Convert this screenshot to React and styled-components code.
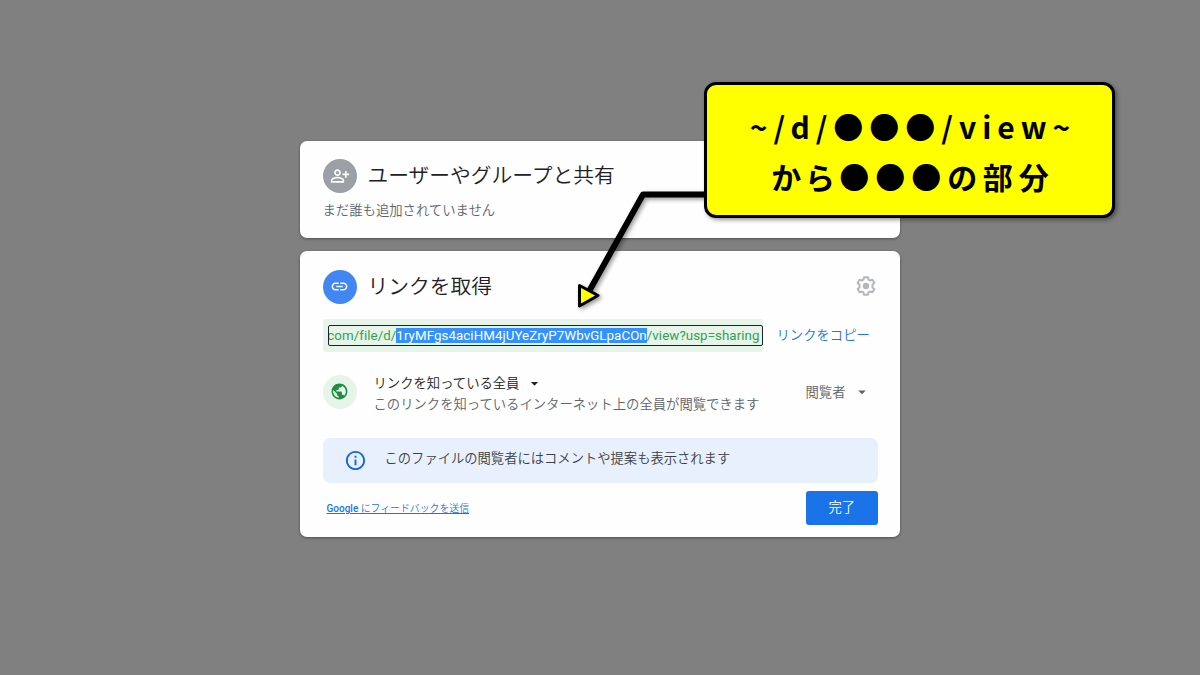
import React from 'react';
import styled, { createGlobalStyle } from 'styled-components';
import {
  MdArrowDropDown,
  MdLink,
  MdOutlineInfo,
  MdOutlinePersonAddAlt,
  MdPublic,
} from 'react-icons/md';

function SettingsIcon() {
  return (
    <svg width="20" height="20" viewBox="0 0 20 20" fill="none">
      <path
        d="M8 1.2h4l.5 2.4 1.5.9 2.4-.8 2 3.3-1.9 1.6v2.8l1.9 1.6-2 3.3-2.4-.8-1.5.9-.5 2.4H8l-.5-2.4-1.5-.9-2.4.8-2-3.3 1.9-1.6V8.6L1.6 7l2-3.3 2.4.8 1.5-.9z"
        stroke="#b4b7ba"
        strokeWidth="2"
        strokeLinejoin="round"
      />
      <circle cx="10" cy="10" r="3.2" fill="#b4b7ba" />
    </svg>
  );
}

function App() {
  return (
    <>
      <GlobalStyle />
      <Stage>
        <Dialog>
          <PeopleCard>
            <CardHeader>
              <Avatar $bg="#9aa0a6" $color="#fff">
                <MdOutlinePersonAddAlt size={20} />
              </Avatar>
              <Title>ユーザーやグループと共有</Title>
            </CardHeader>
            <Subtitle>まだ誰も追加されていません</Subtitle>
          </PeopleCard>

          <LinkCard>
            <CardHeader>
              <Avatar $bg="#4285f4" $color="#fff">
                <MdLink size={19} />
              </Avatar>
              <Title>リンクを取得</Title>
              <SettingsIcon />
            </CardHeader>

            <LinkRow>
              <LinkBox>
                <LinkField>
                  <LinkText>
                    com/file/d/
                    <Selected>1ryMFgs4aciHM4jUYeZryP7WbvGLpaCOn</Selected>
                    /view?usp=sharing
                  </LinkText>
                </LinkField>
              </LinkBox>
              <CopyButton>リンクをコピー</CopyButton>
            </LinkRow>

            <AccessRow>
              <Avatar $bg="#e6f4ea" $color="#1e8e3e">
                <MdPublic size={19} />
              </Avatar>
              <AccessText>
                <Scope>
                  リンクを知っている全員
                  <MdArrowDropDown size={17} />
                </Scope>
                <Description>
                  このリンクを知っているインターネット上の全員が閲覧できます
                </Description>
              </AccessText>
              <Role>
                閲覧者
                <MdArrowDropDown size={18} />
              </Role>
            </AccessRow>

            <Notice>
              <MdOutlineInfo size={23} />
              <NoticeText>
                このファイルの閲覧者にはコメントや提案も表示されます
              </NoticeText>
            </Notice>

            <Footer>
              <Feedback href="#">
                <b>Google</b> にフィードバックを送信
              </Feedback>
              <DoneButton>完了</DoneButton>
            </Footer>
          </LinkCard>
        </Dialog>

        <Pointer width="140" height="130" viewBox="0 0 140 130">
          <path d="M140 14.5H73L17 115" fill="none" stroke="#000" strokeWidth="6" strokeLinejoin="round" />
          <path
            d="M9.5 105.5l18.5 10-18.5 10.5z"
            fill="#ff0"
            stroke="#000"
            strokeWidth="3"
            strokeLinejoin="round"
          />
        </Pointer>
        <Callout>
          <span>~/d/●●●/view~</span>
          <span>から●●●の部分</span>
        </Callout>
      </Stage>
    </>
  );
}

export default App;

const GlobalStyle = createGlobalStyle`
  * {
    box-sizing: border-box;
  }
  body {
    margin: 0;
    background: #808080;
    font-family: Roboto, 'Noto Sans CJK JP', sans-serif;
    font-weight: 350;
  }
`;

const Stage = styled.main`
  position: relative;
  width: 1200px;
  height: 675px;
  overflow: hidden;
  display: flex;
  flex-direction: column;
  align-items: center;
  justify-content: center;
  background: #808080;
`;

const Dialog = styled.div`
  width: 600px;
  display: flex;
  flex-direction: column;
  gap: 13px;
  padding-top: 2px;
`;

const Card = styled.section`
  background: #fefefe;
  border-radius: 7px;
  box-shadow: 0 1px 3px rgba(0, 0, 0, 0.4);
  padding: 0 22.5px;
`;

const PeopleCard = styled(Card)`
  height: 97.5px;
  padding-top: 18.5px;
`;

const LinkCard = styled(Card)`
  height: 285.5px;
  padding-top: 18.5px;
`;

const CardHeader = styled.header`
  display: flex;
  align-items: center;

  > svg {
    margin: 0 1.5px 2px 0;
  }
`;

const Avatar = styled.div`
  flex: none;
  width: 34px;
  height: 34px;
  border-radius: 50%;
  display: flex;
  align-items: center;
  justify-content: center;
  background: ${(props) => props.$bg};
  color: ${(props) => props.$color};
`;

const Title = styled.h1`
  flex: 1;
  margin: 0 0 0 11px;
  font-size: 20.75px;
  line-height: 34px;
  font-weight: 350;
  color: #202124;
  white-space: nowrap;
`;

const Subtitle = styled.p`
  margin: 7.5px 0 0;
  font-size: 13.35px;
  line-height: 20px;
  color: #5f6368;
`;

const LinkRow = styled.div`
  display: flex;
  align-items: center;
  margin-top: 15px;
`;

const LinkBox = styled.div`
  width: 440px;
  height: 33px;
  padding: 6px 0 6px 5px;
  border-radius: 3px;
  background: #e6f4ea;
`;

const LinkField = styled.div`
  display: flex;
  justify-content: flex-end;
  align-items: center;
  height: 21px;
  overflow: hidden;
  border: 1.5px solid #202124;
  border-radius: 2px;
  padding-right: 2px;
`;

const LinkText = styled.span`
  font-size: 13.33px;
  font-weight: 400;
  line-height: 15px;
  letter-spacing: 0.06px;
  color: #34a053;
  white-space: nowrap;
`;

const Selected = styled.mark`
  background: #3390ff;
  color: #fff;
`;

const CopyButton = styled.button`
  margin: -2px 0 0 14px;
  padding: 0;
  border: 0;
  background: none;
  font: inherit;
  font-size: 13.33px;
  color: #1a73e8;
  white-space: nowrap;
`;

const AccessRow = styled.div`
  display: flex;
  align-items: center;
  margin-top: 19px;
  height: 42px;
`;

const AccessText = styled.div`
  flex: 1;
  margin-left: 17px;
  padding-top: 5px;
  font-size: 13.33px;
  line-height: 21.5px;
`;

const Scope = styled.div`
  display: flex;
  align-items: center;
  gap: 7px;
  color: #202124;
`;

const Description = styled.div`
  color: #5f6368;
  white-space: nowrap;
`;

const Role = styled.div`
  display: flex;
  align-items: center;
  gap: 7px;
  margin-right: 7px;
  font-size: 13.33px;
  color: #5f6368;
`;

const Notice = styled.div`
  display: flex;
  align-items: center;
  margin-top: 25px;
  height: 45px;
  padding-left: 21.5px;
  border-radius: 7px;
  background: #e8f0fe;
  color: #1967d2;
`;

const NoticeText = styled.span`
  margin: -5px 0 0 17.5px;
  font-size: 13.3px;
  color: #3c4043;
`;

const Footer = styled.footer`
  display: flex;
  align-items: center;
  justify-content: space-between;
  margin-top: 8px;
`;

const Feedback = styled.a`
  margin-left: 4px;
  font-size: 9.9px;
  color: #1a73e8;

  b {
    font-size: 10px;
    font-weight: 500;
  }
`;

const DoneButton = styled.button`
  width: 71.5px;
  height: 34px;
  border: 0;
  border-radius: 3px;
  padding: 0 0 2px;
  background: #1a73e8;
  color: #fff;
  font: inherit;
  font-size: 13.33px;
`;

const Pointer = styled.svg`
  position: absolute;
  left: 570px;
  top: 180px;
  filter: drop-shadow(2px 2px 2px rgba(0, 0, 0, 0.4));
`;

const Callout = styled.div`
  position: absolute;
  left: 704px;
  top: 82px;
  width: 411px;
  height: 136px;
  padding: 2px 0 0 7px;
  display: flex;
  flex-direction: column;
  align-items: center;
  justify-content: center;
  border: 3px solid #000;
  border-radius: 12px;
  background: #ff0;
  box-shadow: 2px 2px 4px rgba(0, 0, 0, 0.4);
  color: #000;
  font-family: 'Noto Sans CJK JP', sans-serif;
  font-size: 30px;
  font-weight: 700;
  font-feature-settings: 'palt';
  line-height: 50px;
  letter-spacing: 6px;
  white-space: nowrap;
`;
